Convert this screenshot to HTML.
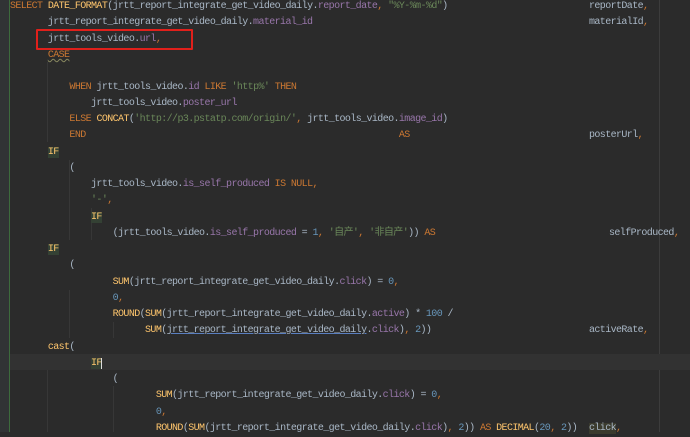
<!DOCTYPE html>
<html><head><meta charset="utf-8"><style>
html,body{margin:0;padding:0;}
body{width:690px;height:432px;overflow:hidden;background:#2b2b2b;position:relative;font-family:"Liberation Mono","Noto Sans CJK SC",monospace;font-size:10px;letter-spacing:-0.6px;color:#a9b7c6;}
.gut{position:absolute;left:0;top:0;width:9px;height:432px;background:#313335;}
.green{position:absolute;left:9px;top:0;width:1px;height:432px;background:#3d6b3d;}
.margin{position:absolute;left:659px;top:0;width:1px;height:432px;background:#3c3c3c;}
.cur{position:absolute;left:10px;top:354px;width:680px;height:16px;background:#323232;}
.l{position:absolute;left:10px;white-space:pre;height:16px;line-height:16px;margin-top:2px;}
.r{position:absolute;white-space:pre;line-height:16px;margin-top:2px;}
.k{color:#cc7832}.f{color:#ffc66d}.p{color:#9876aa}.s{color:#6a8759}.n{color:#6897bb}
.if{background:#344134;color:#ffc66d}
.u{text-decoration:underline;color:#a9b7c6;text-decoration-color:#5a7fc0}
.box{position:absolute;left:36px;top:29px;width:153px;height:17px;border:2px solid #e0201b;border-radius:1px;}
.g{position:absolute;width:1px;background:#373737;}
</style></head><body>
<div class="gut"></div><div class="green"></div><div class="margin"></div><div class="cur"></div>
<div class="g" style="left:47px;top:62px;height:80px"></div>
<div class="g" style="left:69px;top:160px;height:80px"></div>
<div class="g" style="left:91px;top:208px;height:32px"></div>
<div class="g" style="left:69px;top:290px;height:48px"></div>
<div class="g" style="left:113px;top:322px;height:16px"></div>
<div class="g" style="left:47px;top:370px;height:62px"></div>
<div class="g" style="left:113px;top:386px;height:46px"></div>
<div class="l" style="top:-3px"><span class="k">SELECT</span> <span class="f">DATE_FORMAT</span>(jrtt_report_integrate_get_video_daily.<span class="p">report_date</span><span class="k">,</span> <span class="s">"%Y-%m-%d"</span>)</div>
<div class="l" style="top:13px">       jrtt_report_integrate_get_video_daily.<span class="p">material_id</span></div>
<div class="l" style="top:30px">       jrtt_tools_video.<span class="p">url</span><span class="k">,</span></div>
<div class="l" style="top:46px">       <span class="k" style="text-decoration:underline wavy #8a8a60">CASE</span></div>
<div class="l" style="top:78px">           <span class="k">WHEN</span> jrtt_tools_video.<span class="p">id</span> <span class="k">LIKE</span> <span class="s">'http%'</span> <span class="k">THEN</span></div>
<div class="l" style="top:94px">               jrtt_tools_video.<span class="p">poster_url</span></div>
<div class="l" style="top:110px">           <span class="k">ELSE</span> <span class="f">CONCAT</span>(<span class="s">'http://p3.pstatp.com/origin/'</span><span class="k">,</span> jrtt_tools_video.<span class="p">image_id</span>)</div>
<div class="l" style="top:126px">           <span class="k">END</span>                                                          <span class="k">AS</span></div>
<div class="l" style="top:143px">       <span class="if">IF</span></div>
<div class="l" style="top:159px">           (</div>
<div class="l" style="top:175px">               jrtt_tools_video.<span class="p">is_self_produced</span> <span class="k">IS NULL,</span></div>
<div class="l" style="top:191px">               <span class="s">'-'</span><span class="k">,</span></div>
<div class="l" style="top:208px">               <span class="if">IF</span></div>
<div class="l" style="top:224px">                   (jrtt_tools_video.<span class="p">is_self_produced</span> = <span class="n">1</span><span class="k">,</span> <span class="s">'自产'</span><span class="k">,</span> <span class="s">'非自产'</span>)) <span class="k">AS</span></div>
<div class="l" style="top:240px">       <span class="if">IF</span></div>
<div class="l" style="top:256px">           (</div>
<div class="l" style="top:273px">                   <span class="f">SUM</span>(jrtt_report_integrate_get_video_daily.<span class="p">click</span>) = <span class="n">0</span><span class="k">,</span></div>
<div class="l" style="top:289px">                   <span class="n">0</span><span class="k">,</span></div>
<div class="l" style="top:305px">                   <span class="f">ROUND</span>(<span class="f">SUM</span>(jrtt_report_integrate_get_video_daily.<span class="p">active</span>) * <span class="n">100</span> /</div>
<div class="l" style="top:321px">                         <span class="f">SUM</span>(<span class="u">jrtt_report_integrate_get_video_daily</span>.<span class="p">click</span>)<span class="k">,</span> <span class="n">2</span>))</div>
<div class="l" style="top:338px">       <span class="f">cast</span>(</div>
<div class="l" style="top:354px">               <span class="if">IF</span><span style="border-left:1px solid #ddd;margin-left:-1px"></span></div>
<div class="l" style="top:370px">                   (</div>
<div class="l" style="top:386px">                           <span class="f">SUM</span>(jrtt_report_integrate_get_video_daily.<span class="p">click</span>) = <span class="n">0</span><span class="k">,</span></div>
<div class="l" style="top:403px">                           <span class="n">0</span><span class="k">,</span></div>
<div class="l" style="top:419px">                           <span class="f">ROUND</span>(<span class="f">SUM</span>(jrtt_report_integrate_get_video_daily.<span class="p">click</span>)<span class="k">,</span> <span class="n">2</span>)) <span class="k">AS</span> <span class="f">DECIMAL</span>(<span class="n">20</span><span class="k">,</span> <span class="n">2</span>))</div>
<div class="r" style="left:589px;top:-3px">reportDate<span class="k">,</span></div>
<div class="r" style="left:589px;top:13px">materialId<span class="k">,</span></div>
<div class="r" style="left:589px;top:126px">posterUrl<span class="k">,</span></div>
<div class="r" style="left:609px;top:224px">selfProduced<span class="k">,</span></div>
<div class="r" style="left:589px;top:321px">activeRate<span class="k">,</span></div>
<div class="r" style="left:589px;top:419px"><span style="background:#3b3b2e">click</span><span class="k">,</span></div>
<div class="box"></div>
</body></html>
